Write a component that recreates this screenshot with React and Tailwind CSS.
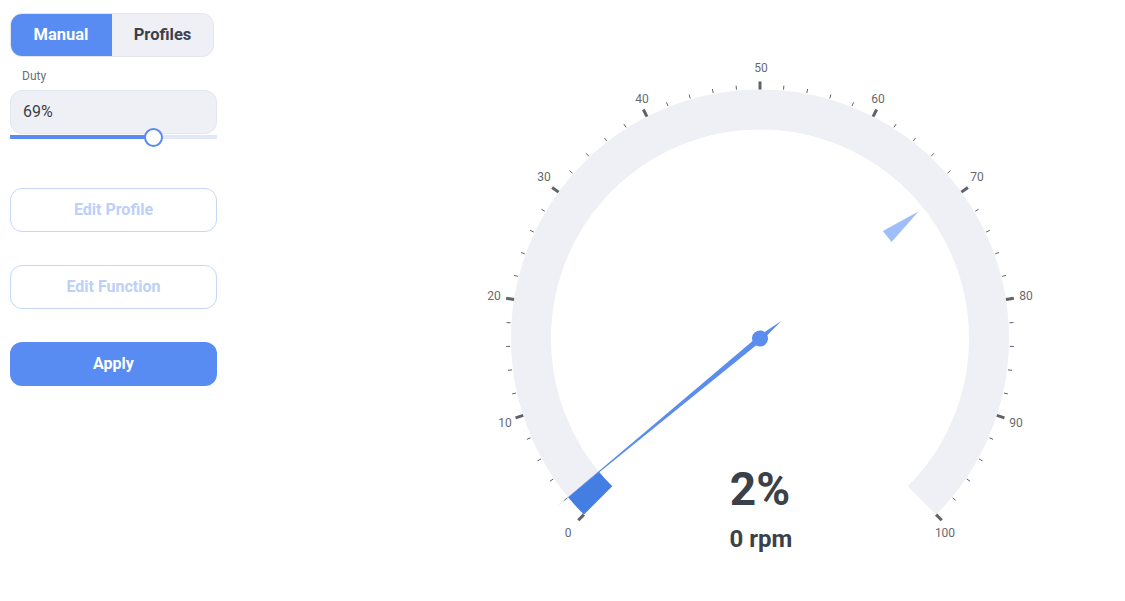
import React from "react";

const CX = 300;
const CY = 338.5;

function pt(r, deg) {
  const a = (deg * Math.PI) / 180;
  return [CX + r * Math.sin(a), CY - r * Math.cos(a)];
}

function arcPath(r, a1, a2) {
  const [x1, y1] = pt(r, a1);
  const [x2, y2] = pt(r, a2);
  const large = a2 - a1 > 180 ? 1 : 0;
  return `M ${x1} ${y1} A ${r} ${r} 0 ${large} 1 ${x2} ${y2}`;
}

const valToDeg = (v) => -135 + v * 2.7;

const LABELS = {
  0: [-192, 194.5],
  10: [-255, 84.5],
  20: [-266, -42.5],
  30: [-216, -162],
  40: [-118, -239.5],
  50: [1, -270.5],
  60: [118, -239.5],
  70: [217, -162],
  80: [266, -42.5],
  90: [256, 84.5],
  100: [185, 194.5],
};

function Gauge() {
  const ticks = [];
  for (let v = 0; v <= 100; v += 2) {
    const major = v % 10 === 0;
    const d = valToDeg(v);
    const [x1, y1] = pt(major ? 249 : 250, d);
    const [x2, y2] = pt(major ? 257 : 254, d);
    ticks.push(
      <line
        key={"t" + v}
        x1={x1}
        y1={y1}
        x2={x2}
        y2={y2}
        stroke="#5f6368"
        strokeWidth={major ? 3 : 1}
      />
    );
    if (major) {
      const [dx, dy] = LABELS[v];
      ticks.push(
        <text
          key={"l" + v}
          x={CX + dx}
          y={CY + dy}
          textAnchor="middle"
          dominantBaseline="central"
          fontSize="12"
          fill="#666a70"
          fontFamily="Roboto, sans-serif"
        >
          {v}
        </text>
      );
    }
  }
  const needleDeg = valToDeg(2);
  const markerDeg = valToDeg(69);
  return (
    <svg width="600" height="590" viewBox="0 0 600 590" className="block">
      <path d={arcPath(229, -135, 135)} stroke="#eff0f5" strokeWidth="40" fill="none" />
      <path d={arcPath(229, -135, needleDeg)} stroke="#457ee2" strokeWidth="40" fill="none" />
      {ticks}
      <polygon
        points="0,-203 7,-163 -7,-163"
        fill="#9fbdf9"
        transform={`translate(${CX} ${CY}) rotate(${markerDeg})`}
      />
      <g transform={`translate(${CX} ${CY}) rotate(${needleDeg})`}>
        <polygon points="0,-265 2.8,0 0,28 -2.8,0" fill="#5b8def" />
        <circle cx="0" cy="0" r="8" fill="#5b8def" />
      </g>
      <text
        x={CX}
        y="505"
        textAnchor="middle"
        fontSize="46"
        fontWeight="700"
        fill="#3c4149"
        fontFamily="Roboto, sans-serif"
      >
        2%
      </text>
      <text
        x={CX + 1}
        y="547"
        textAnchor="middle"
        fontSize="24"
        fontWeight="700"
        fill="#3c4149"
        fontFamily="Roboto, sans-serif"
      >
        0 rpm
      </text>
    </svg>
  );
}

export default function App() {
  return (
    <div
      className="flex w-[1125px] h-[601px] bg-white overflow-hidden"
      style={{ fontFamily: "Roboto, 'Liberation Sans', sans-serif" }}
    >
      <div className="flex flex-col w-[207px] ml-[10px] mt-[13px]">
        <div className="flex w-[204px] h-[44px] rounded-[12px] overflow-hidden border border-[#e2e6f0] bg-[#eff0f5]">
          <div className="w-[102px] -my-px -ml-px bg-[#598cf2] flex items-center justify-center text-white font-bold text-[16.5px]">
            Manual
          </div>
          <div className="flex-1 flex items-center justify-center text-[#3c4149] font-bold text-[16.5px]">
            Profiles
          </div>
        </div>
        <div className="text-[12px] text-[#6b6f76] ml-[12px] mt-[12px] leading-[15px]">Duty</div>
        <div className="mt-[6px] h-[44px] rounded-[12px] bg-[#eff0f5] border border-[#e2e6f0] flex items-center pl-[12px] text-[16px] text-[#3c4149]">
          69%
        </div>
        <div className="relative h-[4px] mt-px bg-[#e0e8f8]">
          <div className="absolute left-0 top-0 h-[4px] w-[143px] bg-[#598cf2]" />
          <div className="absolute left-[134px] top-[-7.5px] w-[19px] h-[19px] rounded-full bg-white border-[2.5px] border-[#598cf2]" />
        </div>
        <button className="mt-[49px] h-[44px] rounded-[12px] border border-[#c5d6f9] bg-white text-[#bcd0f8] font-bold text-[16px]">
          Edit Profile
        </button>
        <button className="mt-[33px] h-[44px] rounded-[12px] border border-[#c5d6f9] bg-white text-[#bcd0f8] font-bold text-[16px]">
          Edit Function
        </button>
        <button className="mt-[33px] h-[44px] rounded-[12px] bg-[#598cf2] text-white font-bold text-[16px]">
          Apply
        </button>
      </div>
      <div className="ml-[243px]">
        <Gauge />
      </div>
    </div>
  );
}
